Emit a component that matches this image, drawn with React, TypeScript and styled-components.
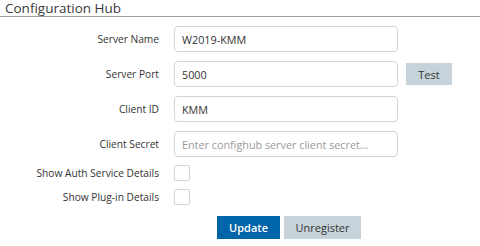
import React from 'react';
import styled, { createGlobalStyle } from 'styled-components';

const GlobalStyle = createGlobalStyle`
    body {
        margin: 0;
        background: #ffffff;
        font-family: "Open Sans", "Noto Sans", sans-serif;
        color: #333333;
    }
`

const Page = styled.div`
    width: 480px;
    height: 246px;
    overflow: hidden;
`

const Title = styled.h3`
    margin: 0;
    padding: 0 0 0 5px;
    line-height: 16px;
    font-size: 13.5px;
    font-weight: 400;
    color: #3a3a3a;
    border-bottom: 1px solid #a0a0a0;
`

const Form = styled.div`
    display: flex;
    flex-direction: column;
    padding-top: 9px;
`

const Row = styled.div<{ $h: number; $gap: number }>`
    display: flex;
    align-items: center;
    height: ${p => p.$h}px;
    margin-bottom: ${p => p.$gap}px;
`

const Label = styled.label`
    width: 159px;
    margin-right: 15px;
    text-align: right;
    font-size: 10.2px;
    color: #333333;
    white-space: nowrap;
`

const Input = styled.input`
    box-sizing: border-box;
    width: 224px;
    height: 26px;
    padding: 0 7px;
    border: 1px solid #d4d4d4;
    border-radius: 4px;
    font-family: inherit;
    font-size: 10.8px;
    color: #333333;
    outline: none;

    &::placeholder {
        color: #9a9a9a;
    }
`

const Check = styled.span`
    box-sizing: border-box;
    width: 16px;
    height: 16px;
    border: 1px solid #d4d4d4;
    border-radius: 2px;
    background: #fff;
`

const Button = styled.button<{ $primary?: boolean }>`
    height: 23px;
    padding: 0;
    border: none;
    font-family: inherit;
    font-size: 11px;
    font-weight: ${p => (p.$primary ? 600 : 400)};
    color: ${p => (p.$primary ? '#ffffff' : '#333333')};
    background: ${p => (p.$primary ? '#0064a8' : '#c6d3da')};
    cursor: pointer;
`

const TestButton = styled(Button)`
    width: 46px;
    height: 22px;
    margin-left: 8px;
`

const Actions = styled.div`
    display: flex;
    gap: 4px;
    padding-left: 217px;
    margin-top: 3px;
`

export default function App() {
    return (
        <Page>
            <GlobalStyle />
            <Title>Configuration Hub</Title>
            <Form>
                <Row $h={26} $gap={9}>
                    <Label>Server Name</Label>
                    <Input defaultValue="W2019-KMM" />
                </Row>
                <Row $h={26} $gap={9}>
                    <Label>Server Port</Label>
                    <Input defaultValue="5000" />
                    <TestButton>Test</TestButton>
                </Row>
                <Row $h={26} $gap={9}>
                    <Label>Client ID</Label>
                    <Input defaultValue="KMM" />
                </Row>
                <Row $h={26} $gap={8}>
                    <Label>Client Secret</Label>
                    <Input placeholder="Enter confighub server client secret..." />
                </Row>
                <Row $h={16} $gap={8}>
                    <Label>Show Auth Service Details</Label>
                    <Check />
                </Row>
                <Row $h={16} $gap={8}>
                    <Label>Show Plug-in Details</Label>
                    <Check />
                </Row>
                <Actions>
                    <Button $primary style={{ width: 63 }}>Update</Button>
                    <Button style={{ width: 77 }}>Unregister</Button>
                </Actions>
            </Form>
        </Page>
    );
}
